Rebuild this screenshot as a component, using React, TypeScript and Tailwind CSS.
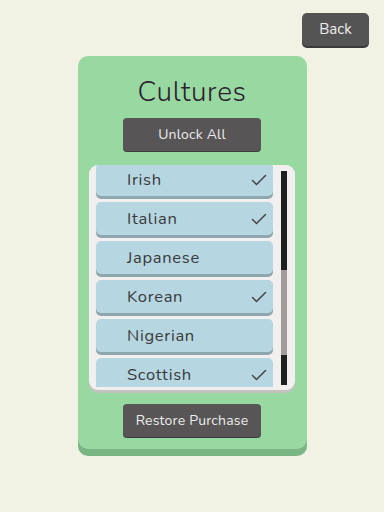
import React from "react";

const items = [
  { name: "Irish", checked: true },
  { name: "Italian", checked: true },
  { name: "Japanese", checked: false },
  { name: "Korean", checked: true },
  { name: "Nigerian", checked: false },
  { name: "Scottish", checked: true },
];

function Check() {
  return (
    <svg width="16" height="12" viewBox="0 0 16 12" fill="none">
      <path d="M1.5 6.5 L5.5 10.5 L14.5 1.5" stroke="#444" strokeWidth="1.5" strokeLinecap="round" strokeLinejoin="round" />
    </svg>
  );
}

export default function App() {
  return (
    <div
      className="w-[384px] h-[512px] bg-[#f2f2e4] flex flex-col"
      style={{ fontFamily: "Nunito, Lato, 'Open Sans', sans-serif" }}
    >
      <div className="flex justify-end pt-[13px] pr-[15px]">
        <button className="w-[67px] h-[33px] rounded-[5px] bg-[#555454] text-[#ececec] text-[15px] shadow-[0_2px_0_#3b3b3b] flex items-center justify-center">
          Back
        </button>
      </div>
      <div className="mt-[10px] mx-auto w-[229px] h-[393px] rounded-[10px] bg-[#98d9a2] shadow-[0_7px_0_#79b683] flex flex-col items-center">
        <div className="mt-[17px] h-[38px] flex items-center text-[28px] font-light text-[#2e1e30] tracking-[0.6px]">
          Cultures
        </div>
        <button className="mt-[7px] w-[138px] h-[33px] rounded-[4px] bg-[#575556] text-[#ededed] text-[14px] tracking-[0.2px] shadow-[0_1px_0_#3b3b3b] flex items-center justify-center">
          Unlock All
        </button>
        <div className="mt-[14px] w-[206px] h-[225px] rounded-[9px] bg-[#f2f0ee] shadow-[0_3px_0_#c4c2bf] flex">
          <div className="ml-[7px] w-[177px] h-[222px] overflow-hidden">
            <div className="-mt-[2px] flex flex-col gap-[6px]">
              {items.map((it) => (
                <div
                  key={it.name}
                  className="h-[33px] shrink-0 rounded-[5px] bg-[#b6d6e1] shadow-[0_3px_0_#8ea6ae] flex items-center pl-[31px] pr-[6px] text-[16.5px] text-[#3a3a3a] tracking-[0.7px]"
                >
                  <span className="flex-1 pt-[1px]">{it.name}</span>
                  {it.checked && <Check />}
                </div>
              ))}
            </div>
          </div>
          <div className="ml-[8px] mt-[6px] w-[6px] h-[214px] flex flex-col">
            <div className="h-[99px] bg-[#1f1f1f]" />
            <div className="h-[85px] bg-[#a19b9b]" />
            <div className="h-[30px] bg-[#1f1f1f]" />
          </div>
        </div>
        <button className="mt-[14px] w-[138px] h-[33px] rounded-[4px] bg-[#575556] text-[#ededed] text-[14px] tracking-[0.2px] shadow-[0_1px_0_#3b3b3b] flex items-center justify-center">
          Restore Purchase
        </button>
      </div>
    </div>
  );
}
